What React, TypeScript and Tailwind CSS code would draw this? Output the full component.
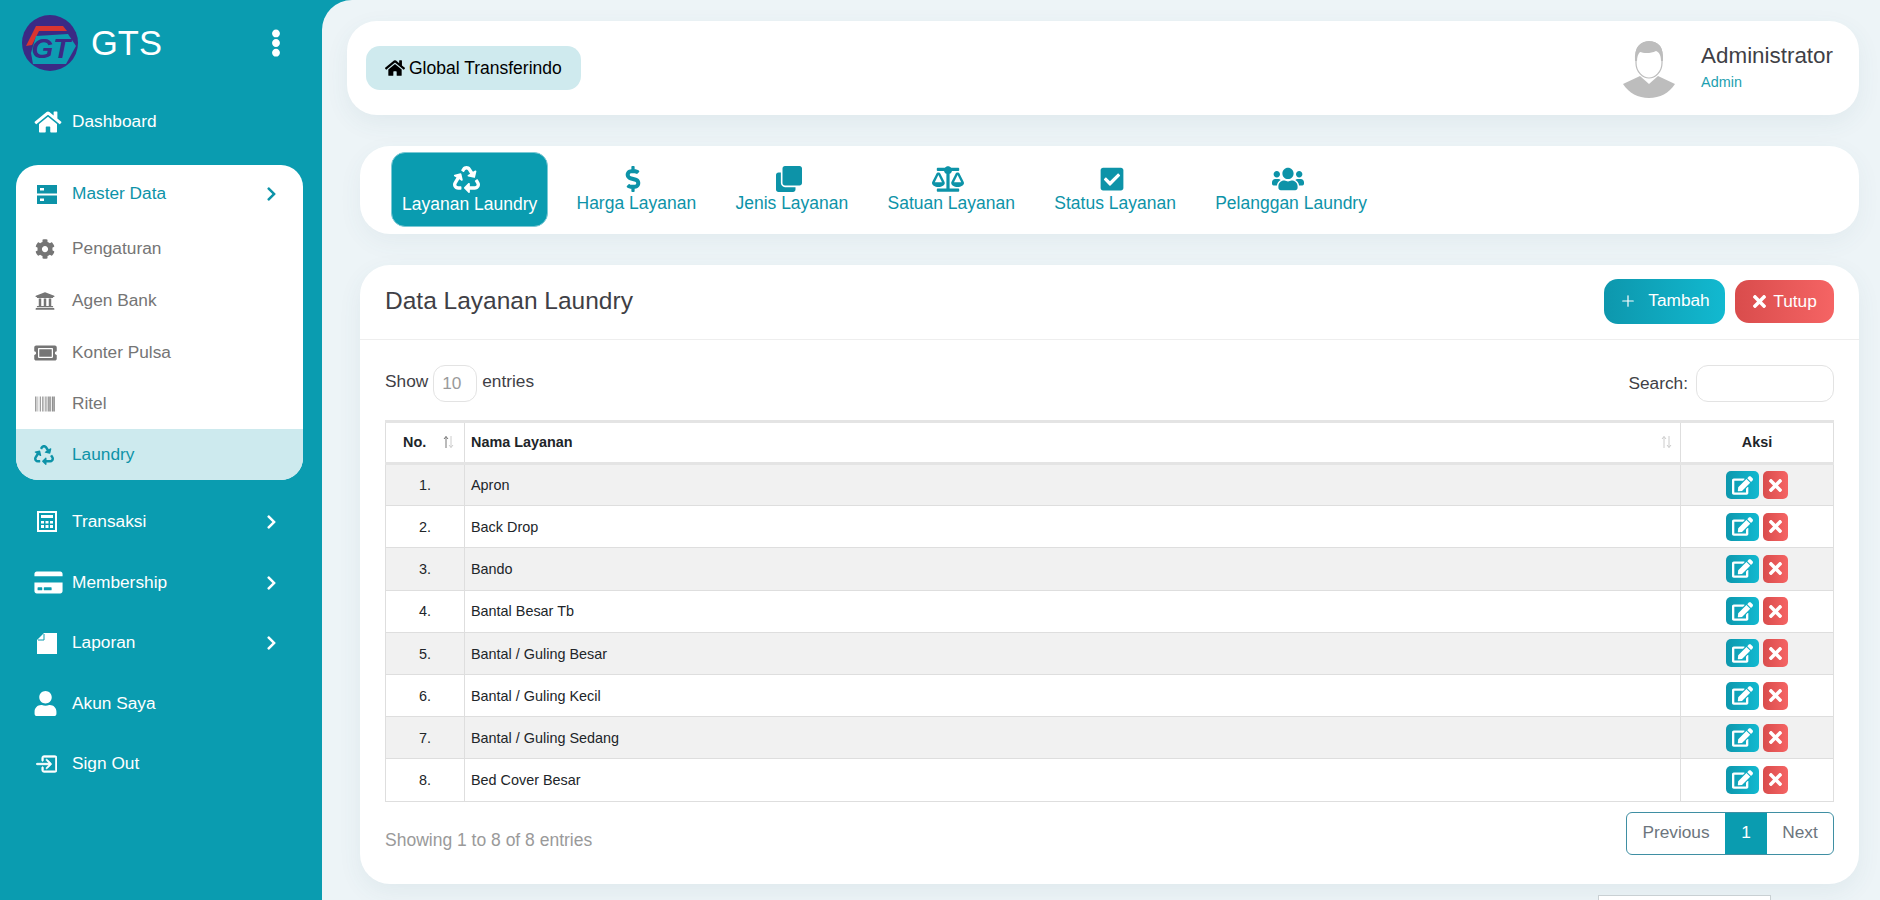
import type { ReactNode } from "react";
import {
  FaHome,
  FaCog,
  FaUniversity,
  FaTicketAlt,
  FaBarcode,
  FaRecycle,
  FaCreditCard,
  FaUser,
  FaChevronRight,
  FaEllipsisV,
  FaDollarSign,
  FaClone,
  FaBalanceScale,
  FaCheckSquare,
  FaUsers,
  FaEdit,
  FaTimes,
} from "react-icons/fa";
import { BsBoxArrowInRight } from "react-icons/bs";
import { Plus } from "lucide-react";

const tabs = [
  { label: "Layanan Laundry", icon: <FaRecycle className="w-[27px] h-[27px]" /> },
  { label: "Harga Layanan", icon: <FaDollarSign className="w-[26px] h-[26px]" /> },
  { label: "Jenis Layanan", icon: <FaClone className="w-[26px] h-[26px]" /> },
  { label: "Satuan Layanan", icon: <FaBalanceScale className="w-[32px] h-[26px]" /> },
  { label: "Status Layanan", icon: <FaCheckSquare className="w-[26px] h-[26px]" /> },
  { label: "Pelanggan Laundry", icon: <FaUsers className="w-[32px] h-[26px]" /> },
];

const rows = [
  "Apron",
  "Back Drop",
  "Bando",
  "Bantal Besar Tb",
  "Bantal / Guling Besar",
  "Bantal / Guling Kecil",
  "Bantal / Guling Sedang",
  "Bed Cover Besar",
];

function Logo() {
  return (
    <svg viewBox="0 0 56 56" className="w-[56px] h-[56px] shrink-0">
      <circle cx="28" cy="28" r="28" fill="#3b2a85" />
      <polygon points="4,31 14,11 41,11 45,16 17,16 10,30" fill="#d9352f" />
      <polygon points="14,21 46,19 54,31 44,49 11,49 9,38" fill="#0d9cb2" />
      <text
        x="29"
        y="43"
        textAnchor="middle"
        fontFamily="Liberation Sans"
        fontSize="28"
        fontWeight="700"
        fontStyle="italic"
        fill="#3b2a85"
      >
        GT
      </text>
    </svg>
  );
}

function ServerIcon() {
  return (
    <svg viewBox="0 0 20 19" className="w-[20px] h-[19px] ml-[3px]">
      <rect width="20" height="8.5" fill="currentColor" />
      <rect y="10.5" width="20" height="8.5" fill="currentColor" />
      <rect x="3" y="3" width="4" height="2.5" fill="#fff" />
      <rect x="3" y="13.5" width="4" height="2.5" fill="#fff" />
    </svg>
  );
}

function CalcIcon() {
  return (
    <svg viewBox="0 0 20 21" className="w-[20px] h-[21px] ml-[3px]">
      <rect x="1" y="1" width="18" height="19" fill="none" stroke="currentColor" strokeWidth="2" />
      <rect x="4" y="4" width="12" height="3" fill="currentColor" />
      <path d="M4 10h3v2.5H4zM8.5 10h3v2.5h-3zM13 10h3v2.5h-3zM4 14h3v3H4zM8.5 14h3v3h-3zM13 14h3v3h-3z" fill="currentColor" />
    </svg>
  );
}

function FileIcon() {
  return (
    <svg viewBox="0 0 20 21" className="w-[20px] h-[21px] ml-[3px]">
      <polygon points="7,0 20,0 20,21 0,21 0,7" fill="currentColor" />
      <polyline points="7,1 7,7 1,7" fill="none" stroke="#0a9cb0" strokeWidth="1" />
    </svg>
  );
}

function Avatar() {
  return (
    <svg viewBox="0 0 52 57" className="w-[52px] h-[57px] mt-[2px]">
      <path d="M0 43 L17 35 L26 43 L35 35 L52 43 C46 52 37 57 26 57 C15 57 6 52 0 43 Z" fill="#bdbdbd" />
      <path d="M13 14 C13 5 19 1 26 1 C34 1 39 5 39 14 L39 22 C39 31 32 37 26 37 C20 37 13 31 13 22 Z" fill="#fff" stroke="#bdbdbd" strokeWidth="1.2" />
      <path d="M12 20 C11 6 18 0 26 0 C35 0 41 6 40 20 L38 20 C38 14 36 11 33 10 C27 13 20 12 17 11 C15 13 14 16 14 20 Z" fill="#bdbdbd" />
    </svg>
  );
}

function SortIcon({ dark }: { dark?: boolean }) {
  return (
    <svg viewBox="0 0 11 14" className="w-[11px] h-[14px] shrink-0">
      <path d="M3 13 V1.5 M1 4 L3 1.5 L5 4" fill="none" stroke={dark ? "#777" : "#ccc"} strokeWidth="1" />
      <path d="M8 1 V12.5 M6 10 L8 12.5 L10 10" fill="none" stroke="#ccc" strokeWidth="1" />
    </svg>
  );
}

function MenuRow({
  icon,
  label,
  arrow,
  className,
}: {
  icon: ReactNode;
  label: string;
  arrow?: boolean;
  className: string;
}) {
  return (
    <div className={`flex items-center pl-[18px] pr-[26px] ${className}`}>
      <span className="w-[38px] shrink-0 flex items-center">{icon}</span>
      <span className="flex-1">{label}</span>
      {arrow && <FaChevronRight className="w-[11px] h-[16px]" />}
    </div>
  );
}

export default function App() {
  return (
    <div className="flex h-[900px] overflow-hidden bg-[#0a9cb0] font-['Liberation_Sans',Arial,sans-serif] text-[17.3px]">
      {/* Sidebar */}
      <aside className="w-[322px] shrink-0 pl-4 pr-[19px] text-white">
        <div className="flex items-center pt-[15px] pl-[6px] pr-[13px]">
          <Logo />
          <span className="ml-[13px] flex-1 text-[34.5px] leading-[56px]">GTS</span>
          <FaEllipsisV className="w-[28px] h-[28px]" />
        </div>

        <MenuRow
          className="h-[50px] mt-[26px]"
          label="Dashboard"
          icon={<FaHome className="w-[28px] h-[24px]" />}
        />

        <div className="mt-[18px] bg-white rounded-[22px] overflow-hidden text-[#757575]">
          <MenuRow
            className="h-[58px] text-[#0d93a8]"
            label="Master Data"
            arrow
            icon={<ServerIcon />}
          />
          <MenuRow className="h-[52px]" label="Pengaturan" icon={<FaCog className="w-[20px] h-[20px] ml-[1px]" />} />
          <MenuRow className="h-[52px]" label="Agen Bank" icon={<FaUniversity className="w-[20px] h-[20px] ml-[1px]" />} />
          <MenuRow className="h-[51px]" label="Konter Pulsa" icon={<FaTicketAlt className="w-[23px] h-[20px]" />} />
          <MenuRow className="h-[51px]" label="Ritel" icon={<FaBarcode className="w-[22px] h-[20px]" />} />
          <MenuRow
            className="h-[51px] bg-[#cdeaee] text-[#0d93a8]"
            label="Laundry"
            icon={<FaRecycle className="w-[20px] h-[20px]" />}
          />
        </div>

        <div className="mt-[11px]">
          <MenuRow className="h-[61px]" label="Transaksi" arrow icon={<CalcIcon />} />
          <MenuRow className="h-[61px]" label="Membership" arrow icon={<FaCreditCard className="w-[29px] h-[25px]" />} />
          <MenuRow className="h-[60px]" label="Laporan" arrow icon={<FileIcon />} />
          <MenuRow className="h-[61px]" label="Akun Saya" icon={<FaUser className="w-[23px] h-[25px]" />} />
          <MenuRow
            className="h-[60px]"
            label="Sign Out"
            icon={<BsBoxArrowInRight className="w-[22px] h-[22px] ml-[1px]" stroke="currentColor" strokeWidth={0.6} />}
          />
        </div>
      </aside>

      {/* Main */}
      <main className="flex-1 rounded-tl-[30px] bg-[#edf4f7] pt-[21px] pr-[21px] pl-[25px]">
        <header className="h-[94px] flex items-center justify-between bg-white rounded-[30px] pl-[19px] pr-[26px] shadow-[0_8px_24px_rgba(60,100,120,0.07)]">
          <div className="h-[44px] px-[19px] flex items-center gap-[4px] rounded-[14px] bg-[#cfeaee] text-black text-[17.5px]">
            <FaHome className="w-[20px] h-[18px]" />
            Global Transferindo
          </div>
          <div className="flex items-center gap-[26px]">
            <Avatar />
            <div className="flex flex-col pb-[2px]">
              <span className="text-[22.4px] leading-[26px] text-[#3f3f46]">Administrator</span>
              <span className="mt-[3px] text-[14.4px] leading-[20px] text-[#1d9fb0]">Admin</span>
            </div>
          </div>
        </header>

        <div className="ml-[13px]">
          <nav className="mt-[31px] h-[88px] pb-[2px] flex items-center gap-[19.25px] bg-white rounded-[30px] pl-[31px] text-[17.5px] shadow-[0_8px_24px_rgba(60,100,120,0.06)]">
            {tabs.map((tab, i) => (
              <div
                key={tab.label}
                className={`h-[75px] flex flex-col items-center justify-start pt-[13px] rounded-[14px] px-[10px] ${
                  i === 0 ? "-mr-[1px] bg-[#0a9cb0] text-white border border-[#7cc9d5]" : "text-[#0d93a8]"
                }`}
              >
                <span className="h-[28px] pr-[6px] flex items-center">{tab.icon}</span>
                <span className="leading-[20px]">{tab.label}</span>
              </div>
            ))}
          </nav>

          <section className="mt-[31px] h-[619px] bg-white rounded-[30px] shadow-[0_8px_24px_rgba(60,100,120,0.07)]">
            <div className="h-[75px] pb-[2px] flex items-center justify-between pl-[25px] pr-[25px] border-b border-[#eeeeee]">
              <h2 className="text-[24.5px] text-[#3f3f46]">Data Layanan Laundry</h2>
              <div className="flex items-center gap-[10px]">
                <button className="h-[45px] w-[121px] flex items-center justify-center gap-[11px] rounded-[14px] text-white bg-gradient-to-r from-[#0d97ad] to-[#12b9d0]">
                  <Plus className="w-[18px] h-[18px]" strokeWidth={1.6} />
                  Tambah
                </button>
                <button className="h-[43px] w-[99px] flex items-center justify-center gap-[4px] rounded-[14px] text-white bg-gradient-to-r from-[#d94c4c] to-[#f56464]">
                  <FaTimes className="w-[19px] h-[19px] -ml-[2px]" />
                  <span className="pt-[1px]">Tutup</span>
                </button>
              </div>
            </div>

            <div className="px-[25px] pt-[25px] text-[#3f3f46]">
              <div className="flex items-center justify-between h-[37px]">
                <div className="flex items-center">
                  <span className="pb-[3px]">Show</span>
                  <select className="mx-[5px] w-[44px] h-[37px] pl-[8px] rounded-[12px] border border-[#e3e3e3] text-[#9a9a9a] appearance-none bg-white">
                    <option>10</option>
                  </select>
                  <span className="pb-[3px]">entries</span>
                </div>
                <div className="flex items-center gap-[8px]">
                  <span>Search:</span>
                  <input className="w-[138px] h-[37px] rounded-[12px] border border-[#e3e3e3]" />
                </div>
              </div>

              <table className="mt-[18px] w-full table-fixed border-collapse text-[14.4px] text-[#212529]">
                <thead>
                  <tr className="h-[42px] border-y-[3px] border-[#e4e4e4] font-bold">
                    <th className="w-[79px] border-x border-[#dedede]">
                      <div className="flex items-center pl-[17px] pr-[10px] justify-between">
                        No. <SortIcon dark />
                      </div>
                    </th>
                    <th className="border-x border-[#dedede]">
                      <div className="flex items-center justify-between px-[6px] pr-[8px]">
                        Nama Layanan <SortIcon />
                      </div>
                    </th>
                    <th className="w-[153px] border-x border-[#dedede]">Aksi</th>
                  </tr>
                </thead>
                <tbody>
                  {rows.map((name, i) => (
                    <tr
                      key={name}
                      className={`h-[42.2px] border-b border-[#dedede] ${i % 2 === 0 ? "bg-[#f1f1f1]" : "bg-white"}`}
                    >
                      <td className="pt-[2px] text-center border-x border-[#dedede]">{i + 1}.</td>
                      <td className="pt-[2px] px-[6px] border-x border-[#dedede]">{name}</td>
                      <td className="border-x border-[#dedede]">
                        <div className="flex items-center justify-center gap-[4px]">
                          <button className="w-[33px] h-[28px] flex items-center justify-center rounded-[5px] text-white bg-gradient-to-r from-[#0d97ad] to-[#12b9d0]">
                            <FaEdit className="w-[21px] h-[19px]" />
                          </button>
                          <button className="w-[25px] h-[28px] flex items-center justify-center rounded-[5px] text-white bg-gradient-to-r from-[#d94c4c] to-[#f56464]">
                            <FaTimes className="w-[19px] h-[19px]" />
                          </button>
                        </div>
                      </td>
                    </tr>
                  ))}
                </tbody>
              </table>

              <div className="mt-[10px] flex items-start justify-between">
                <span className="mt-[15px] text-[#9a9a9a] text-[17.5px]">Showing 1 to 8 of 8 entries</span>
                <div className="flex h-[43px] items-stretch rounded-[6px] border border-[#3f8fa3] overflow-hidden text-[#6c757d]">
                  <span className="w-[98px] flex items-center justify-center">Previous</span>
                  <span className="w-[42px] flex items-center justify-center bg-[#0a9cb0] text-white">1</span>
                  <span className="w-[66px] flex items-center justify-center">Next</span>
                </div>
              </div>
            </div>
          </section>

          <div className="mt-[11px] ml-auto mr-[88px] w-[173px] h-[20px] bg-white border border-[#c9d0d3]" />
        </div>
      </main>
    </div>
  );
}
